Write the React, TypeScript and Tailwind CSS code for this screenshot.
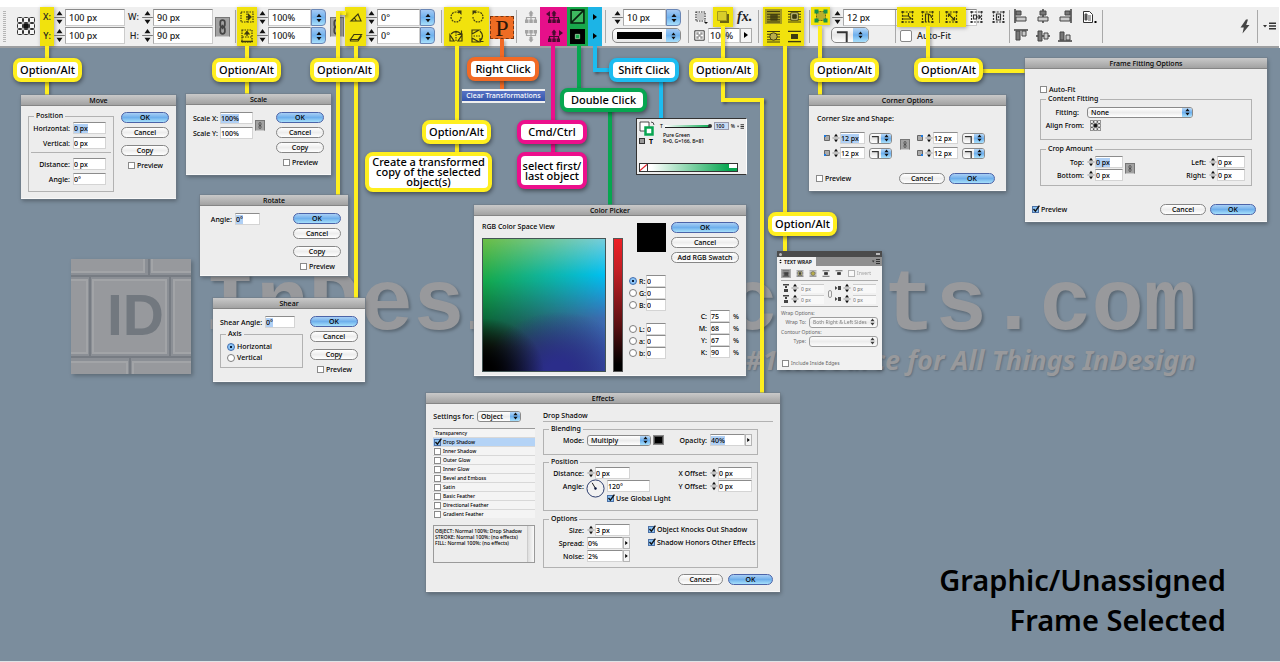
import type { ReactNode } from "react";

type Kids = { children?: ReactNode; className?: string };

/* --- SMALL CONTROLS --- */

function Arrows({ className = "w-[5px] h-[8px]" }: { className?: string }) {
  return (
    <svg viewBox="0 0 5 8" className={`shrink-0 ${className}`} fill="#111">
      <path d="M2.5 0.5 4.6 3.2H0.4zM2.5 7.5 4.6 4.8H0.4z" />
    </svg>
  );
}

function Stepper({ big }: { big?: boolean }) {
  return (
    <svg viewBox="0 0 10 14" className={big ? "w-[11px] h-[15px] shrink-0" : "w-[8px] h-[10px] shrink-0"} fill="#111">
      <path d="M5 1 7.8 5H2.2zM5 13 7.8 9H2.2z" />
      <path d="M0 6.5h10v1H0z" fill="#777" />
    </svg>
  );
}

function Box({ value, name, hot, step, className = "w-[33px]" }: { value: string; name: string; hot?: boolean; step?: boolean; className?: string }) {
  return (
    <span className="flex items-center shrink-0">
      {step && <Stepper />}
      <span className={`flex items-center h-3 bg-white border border-[#d4d4d4] border-t-[#8c8c8c] ${className}`}>
        <input aria-label={name} defaultValue={value} className={`field-sizing-content max-w-full h-[9px] leading-[9px] outline-none ${hot ? "bg-[#b0d0f5]" : "bg-transparent"}`} />
      </span>
    </span>
  );
}

function Row({ label, lw, children, className = "" }: Kids & { label: string; lw: string }) {
  return (
    <div className={`flex items-center h-3 ${className}`}>
      <span className={`text-right shrink-0 whitespace-nowrap mr-[3px] ${lw}`}>{label}</span>
      {children}
    </div>
  );
}

function Check({ label, on, className = "" }: { label: string; on?: boolean; className?: string }) {
  return (
    <label className={`flex items-center gap-[2px] whitespace-nowrap ${className}`}>
      <span className="relative flex shrink-0">
        <input type="checkbox" defaultChecked={on} className="appearance-none w-[7px] h-[7px] bg-white border border-[#8a8a8a] checked:bg-[#8cc3f3] checked:border-[#4a6fa5]" />
        {on && (
          <svg viewBox="0 0 8 8" className="absolute left-0 -top-px w-2 h-2" fill="none" stroke="#111" strokeWidth="1.4">
            <path d="M1.5 4 3.4 6.2 7.4 0.6" />
          </svg>
        )}
      </span>
      {label}
    </label>
  );
}

function Radio({ label, group, on, className = "" }: { label: string; group: string; on?: boolean; className?: string }) {
  return (
    <label className={`flex items-center gap-[2px] ${className}`}>
      <input type="radio" name={group} defaultChecked={on} className="appearance-none w-2 h-2 shrink-0 rounded-full bg-white border border-[#7d7d7d] checked:border-[#3f6cae] checked:bg-[radial-gradient(circle,#0a1a33_28%,#8cc4f5_36%)]" />
      {label}
    </label>
  );
}

function Btn({ children, primary, className = "w-[48px]" }: Kids & { primary?: boolean }) {
  return (
    <button
      className={`h-[11px] shrink-0 leading-[9px] text-center rounded-full border ${
        primary
          ? "border-[#4c64a8] bg-[linear-gradient(#a9cff5,#6fb0ec_50%,#a6e0fb)]"
          : "border-[#868686] bg-[linear-gradient(#fff,#ededed_50%,#fff)]"
      } ${className}`}
    >
      {children}
    </button>
  );
}

function Select({ value, name, className = "", plain }: { value: string; name: string; className?: string; plain?: boolean }) {
  return (
    <span className={`flex h-[11px] shrink-0 overflow-hidden rounded-[3px] border border-[#8a8a8a] bg-[linear-gradient(#fff,#ececec_50%,#fff)] ${className}`}>
      <select aria-label={name} className="appearance-none flex-1 min-w-0 pl-[3px] leading-[9px] bg-transparent outline-none">
        <option>{value}</option>
      </select>
      <span className={`w-[10px] flex items-center justify-center ${plain ? "" : "bg-[linear-gradient(#b6d7f7,#6eb0ee_50%,#a8e0fb)]"}`}>
        <Arrows />
      </span>
    </span>
  );
}

function CornerSelect({ name, big }: { name: string; big?: boolean }) {
  return (
    <button aria-label={name} className={`flex shrink-0 overflow-hidden border border-[#8a8a8a] bg-[linear-gradient(#fff,#e6e6e6_50%,#fff)] ${big ? "w-[38px] h-[16px] rounded-[5px]" : "w-[23px] h-[11px] rounded-[3px]"}`}>
      <svg viewBox="0 0 12 10" className="flex-1 min-w-0 h-full" fill="none" stroke="#333" strokeWidth="1.4">
        <path d="M2 3h7v7" />
      </svg>
      <span className={`h-full flex items-center justify-center bg-[linear-gradient(#b6d7f7,#6eb0ee_50%,#a8e0fb)] ${big ? "w-[15px]" : "w-[10px]"}`}>
        <Arrows />
      </span>
    </button>
  );
}

function LinkIcon({ className = "w-[11px] h-[11px]" }: { className?: string }) {
  return (
    <span className={`flex items-center justify-center shrink-0 bg-[#a2a2a2] border border-[#777] border-b-[#ccc] ${className}`}>
      <svg viewBox="0 0 8 14" className="h-full py-px" fill="none" stroke="#444" strokeWidth="1.5">
        <rect x="2" y="1" width="4" height="6" rx="2" />
        <rect x="2" y="7" width="4" height="6" rx="2" />
        <path d="M4 5v4" />
      </svg>
    </span>
  );
}

function Flyout() {
  return (
    <button aria-label="More" className="w-[7px] h-3 shrink-0 flex items-center justify-center border border-[#b5b5b5] bg-[#f4f4f4]">
      <svg viewBox="0 0 4 6" className="w-[3px] h-[4px]"><path d="M0 0 4 3 0 6z" /></svg>
    </button>
  );
}

function Group({ legend, children, className = "" }: Kids & { legend: string }) {
  return (
    <fieldset className={`border border-[#b2b2b2] shrink-0 min-w-0 ${className}`}>
      <legend className="ml-[5px] px-[2px] h-2 leading-[8px]">{legend}</legend>
      {children}
    </fieldset>
  );
}

function Dialog({ title, children, className = "" }: Kids & { title: string }) {
  return (
    <section className={`absolute bg-[#ededed] border-b border-[#f8f8f8] outline outline-[#6f7c88]/50 shadow-[1px_2px_4px_rgba(0,0,0,0.3)] text-[7px] leading-[9px] font-medium text-black ${className}`}>
      <h2 className="h-[11px] leading-[11px] text-center bg-[linear-gradient(#c9c9c9,#a2a2a2)] border-b border-[#858585]">{title}</h2>
      {children}
    </section>
  );
}

function DialogButtons({ split, className = "" }: { split?: boolean; className?: string }) {
  return (
    <div className={`flex flex-col gap-1 ${className}`}>
      <Btn primary>OK</Btn>
      <Btn>Cancel</Btn>
      <Btn className={split ? "w-[48px] mt-[3px]" : "w-[48px]"}>Copy</Btn>
      <Check label="Preview" className="self-end mr-[6px] mt-px" />
    </div>
  );
}

/* --- CALLOUTS --- */

const tones = {
  yellow: "border-[#ffef1f]",
  orange: "border-[#f26a25]",
  cyan: "border-[#1cbcf0]",
  green: "border-[#06a650]",
  pink: "border-[#ec0f8c]",
};

function Callout({ tone = "yellow", children, className = "" }: Kids & { tone?: keyof typeof tones }) {
  return (
    <div className={`absolute flex items-center justify-center text-center whitespace-nowrap bg-white border-4 rounded-[8px] shadow-[1px_2px_4px_rgba(0,0,0,0.45)] text-[11px] leading-[10px] font-medium text-black ${tones[tone]} ${className}`}>
      {children}
    </div>
  );
}

function Wire({ className }: { className: string }) {
  return <i className={`absolute shadow-[2px_2px_3px_rgba(0,0,0,0.25)] ${className}`} />;
}

/* --- CONTROL BAR --- */

function BarField({ value, name, arrows }: { value: string; name: string; arrows?: boolean }) {
  return (
    <label className="flex items-center h-[17px]">
      <Stepper big />
      <input aria-label={name} defaultValue={value} className="flex-1 min-w-0 h-full pl-[3px] bg-white border border-[#ccc] border-t-[#8a8a8a] border-l-[#aaa] outline-none" />
      {arrows && (
        <span className="w-[15px] h-full rounded-r-[4px] border border-[#6a86b5] flex items-center justify-center bg-[linear-gradient(#a4c9f3,#6fb2ee_50%,#a8dffb)]">
          <Arrows className="w-[6px] h-[10px]" />
        </span>
      )}
    </label>
  );
}

function Stack({ children, className = "" }: Kids) {
  return <div className={`flex flex-col gap-px pt-[2px] shrink-0 ${className}`}>{children}</div>;
}

function Sep({ className = "" }: { className?: string }) {
  return <i className={`w-px my-[3px] shrink-0 bg-[#a9a9a9] ${className}`} />;
}

function Hot({ children, className = "" }: Kids) {
  return <div className={`flex flex-col items-center justify-around shrink-0 bg-[#f1e20d] shadow-[1px_1px_4px_rgba(0,0,0,0.3)] ${className}`}>{children}</div>;
}

function Glyph({ children, className = "w-[14px] h-[14px]" }: Kids) {
  return (
    <svg viewBox="0 0 14 14" className={`shrink-0 ${className}`} fill="none" stroke="#3d3a10" strokeWidth="1.2">
      {children}
    </svg>
  );
}

function RefPoint({ className }: { className: string }) {
  const at = [0.5, 6.5, 12.5];
  return (
    <svg viewBox="0 0 18 18" className={`shrink-0 ${className}`} fill="#f4f4f4" stroke="#333">
      <path d="M4 2.500h10M4 15.500h10M2.500 4v10M15.500 4v10" fill="none" />
      {at.map((y) => at.map((x) => <rect key={`${x}-${y}`} x={x} y={y} width="5" height="5" rx="1" fill={x === 6.5 && y === 6.5 ? "#111" : "#f4f4f4"} />))}
    </svg>
  );
}

function Tree({ color, flip, arrow }: { color: string; flip?: boolean; arrow?: "left" | "right" }) {
  return (
    <svg viewBox="0 0 18 14" className="w-[18px] h-[14px]" fill={color} stroke={color}>
      <g transform={flip ? "matrix(1 0 0 -1 0 14)" : undefined}>
        <path d="M9 3v8M4.500 11V7.500h9V11" fill="none" strokeWidth="1.200" />
        <path d="M9 0.500 11.500 3.500h-5z" stroke="none" />
        <path d="M7.500 3h3v3h-3zM3 9.500h3.500V13H3zM7.300 9.500h3.500V13H7.300zM11.600 9.500H15V13h-3.400z" stroke="none" />
      </g>
      {arrow === "left" && <path d="M5 1v6L1 4z" stroke="none" />}
      {arrow === "right" && <path d="M14 1v6l4-3z" stroke="none" />}
    </svg>
  );
}

const corners = "M1 1h2v2H1zM11 1h2v2h-2zM1 11h2v2H1zM11 11h2v2h-2z";

function FitIcon({ d, tone = "#3d3a10" }: { d: string; tone?: string }) {
  return (
    <svg viewBox="0 0 14 14" className="w-[15px] h-[14px] shrink-0" fill="none" stroke={tone} strokeWidth="1.2">
      <path d="M2 2h10v10H2z" strokeDasharray="2 1.200" />
      <path d={corners} fill={tone} stroke="none" />
      <path d={d} />
    </svg>
  );
}

function AlignIcon({ line, a, b }: { line: string; a: string; b: string }) {
  return (
    <svg viewBox="0 0 14 14" className="w-[14px] h-[14px]" strokeWidth="1">
      <path d={line} stroke="#222" strokeWidth="1.300" />
      <path d={a} fill="#777" stroke="#444" />
      <path d={b} fill="#ccc" stroke="#444" />
    </svg>
  );
}

function WrapIcon({ kind, tone = "#3d3a10", className = "w-[15px] h-[13px]" }: { kind: number; tone?: string; className?: string }) {
  return (
    <svg viewBox="0 0 14 14" className={`shrink-0 ${className}`} fill={tone} stroke={tone}>
      {kind < 4 && <path d="M0 1.500h14M0 4.500h14M0 7.500h14M0 10.500h14M0 13h14" strokeWidth="1.100" />}
      {kind === 1 && <path d="M4 5h7v6H4z" opacity="0.8" />}
      {kind === 2 && <path d="M3 3h8v8H3z" fill="#ddd68a" />}
      {kind === 2 && <path d="M5 5h4v4H5z" />}
      {kind === 3 && <circle cx="7" cy="7" r="4" fill="#b9ae4a" />}
      {kind > 3 && <path d="M0 1.500h14M4 5h6v4H4z" strokeWidth="1.500" />}
      {kind === 4 && <path d="M0 12.500h14" strokeWidth="1.500" />}
    </svg>
  );
}

function ControlBar() {
  return (
    <header className="bg-white pt-[7px] pr-px text-[9px] leading-[12px] font-medium text-[#222]">
      <div className="flex h-[39px] bg-[#efefef]">
        <i className="w-[3px] ml-[3px] my-[4px] shrink-0 bg-[repeating-linear-gradient(#b5b5b5_0_1px,#efefef_1px_2px)]" />
        <RefPoint className="w-[18px] h-[18px] ml-[11px] mt-[10px]" />
        <Hot className="w-[14px] ml-[5px]"><span>X:</span><span>Y:</span></Hot>
        <Stack className="w-[71px]">
          <BarField name="X" value="100 px" />
          <BarField name="Y" value="100 px" />
        </Stack>
        <div className="w-[17px] pr-[3px] shrink-0 flex flex-col justify-around text-right"><span>W:</span><span>H:</span></div>
        <Stack className="w-[71px]">
          <BarField name="W" value="90 px" />
          <BarField name="H" value="90 px" />
        </Stack>
        <LinkIcon className="w-[15px] h-5 ml-[2px] mt-[10px]" />
        <Sep className="ml-[5px]" />
        <Hot className="w-5 ml-px">
          <Glyph><path d="M1 2h6v10H1zM7 2h6v10H7" strokeDasharray="1.500 1" /><path d="M6 7h4M8.500 4.500 11 7 8.500 9.500z" fill="#3d3a10" /></Glyph>
          <Glyph><path d="M2 1h10v7H2zM2 8v5h10V8" strokeDasharray="1.500 1" /><path d="M7 3v4M5 5h4L7 2.500z" fill="#3d3a10" /><path d="M1 12.500h12" strokeWidth="1.500" /></Glyph>
        </Hot>
        <Stack className="w-[69px]">
          <BarField name="Scale X" value="100%" arrows />
          <BarField name="Scale Y" value="100%" arrows />
        </Stack>
        <LinkIcon className="w-[14px] h-5 ml-1 mt-[10px]" />
        <Hot className="w-[21px] ml-px">
          <Glyph><path d="M2 11h10L9 4z" /><path d="M5 8q2 1 2 3" /></Glyph>
          <Glyph><path d="M1.500 10.500 5 5.500h7.500L9 10.500zM1.500 10.500v1.500H9l3.500-5" /></Glyph>
        </Hot>
        <Stack className="w-[69px]">
          <BarField name="Rotation" value="0°" arrows />
          <BarField name="Shear" value="0°" arrows />
        </Stack>
        <Sep className="ml-[6px]" />
        <Hot className="w-[45px] ml-[2px]">
          <div className="flex gap-[8px]">
            <Glyph><path d="M10 3a5 5 0 1 0 2 4" strokeDasharray="1.800 0.900" /><path d="M8 0.500h4.500V5z" fill="#3d3a10" stroke="none" /></Glyph>
            <Glyph><path d="M4 3a5 5 0 1 1-2 4" strokeDasharray="1.800 0.900" /><path d="M6 0.500H1.500V5z" fill="#3d3a10" stroke="none" /></Glyph>
          </div>
          <div className="flex gap-[8px]">
            <Glyph><path d="M1 12V6l4 6zM13 12V6l-4 6z" /><path d="M7 3v10" strokeDasharray="1.500 1" /><path d="M2 5q5-5 10 0M12.500 1.500v4h-4" /></Glyph>
            <Glyph><path d="M1 1h7L1 5zM1 13h7L1 9z" /><path d="M0 7h9" strokeDasharray="1.500 1" /><path d="M9 2q5 5 0 10M9 9v3.500h3.500" /></Glyph>
          </div>
        </Hot>
        <div className="w-6 h-[23px] ml-px mt-[9px] shrink-0 flex items-center justify-center bg-[#ee6c23] border border-dashed border-[#7a3610] font-['Liberation_Serif',serif] text-[24px] leading-[20px] text-[#2c1608]">P</div>
        <Sep className="ml-[2px]" />
        <div className="w-[18px] ml-[5px] shrink-0 flex flex-col items-center justify-around">
          <Tree color="#a3a3a3" />
          <Tree color="#a3a3a3" flip />
        </div>
        <div className="w-[27px] shrink-0 flex flex-col items-center justify-around bg-[#e6108a]">
          <Tree color="#4b0a30" arrow="left" />
          <Tree color="#4b0a30" arrow="right" />
        </div>
        <div className="w-[21px] shrink-0 flex flex-col items-center justify-around bg-[#18a84c]">
          <svg viewBox="0 0 14 14" className="w-[15px] h-[15px]"><path d="M1 1h12v12H1zM1 13 13 1" fill="#3fb95f" stroke="#08210f" strokeWidth="1.500" /></svg>
          <svg viewBox="0 0 14 14" className="w-[15px] h-[15px]"><path d="M0 0h14v14H0z" /><path d="M5 5h4v4H5z" fill="#18a84c" stroke="#cfc" strokeWidth="0.600" /></svg>
        </div>
        <div className="w-[14px] shrink-0 flex flex-col items-center justify-around bg-[#1cb4e6]">
          <svg viewBox="0 0 8 8" className="w-2 h-2"><path d="M2 1 6 4 2 7z" /></svg>
          <svg viewBox="0 0 8 8" className="w-2 h-2"><path d="M2 1 6 4 2 7z" /></svg>
        </div>
        <Sep className="ml-[3px]" />
        <Stack className="w-[69px] ml-[6px]">
          <BarField name="Stroke weight" value="10 px" arrows />
          <button aria-label="Stroke style" className="flex items-center h-[15px] mt-px rounded-[5px] border border-[#8a8a8a] bg-[linear-gradient(#fff,#e8e8e8)] overflow-hidden">
            <span className="flex-1 h-[7px] mx-1 bg-black" />
            <span className="w-[14px] h-full flex items-center justify-center bg-[linear-gradient(#a4c9f3,#6fb2ee_50%,#a8dffb)]"><Arrows /></span>
          </button>
        </Stack>
        <Sep className="ml-[7px]" />
        <div className="w-[60px] ml-[5px] shrink-0">
          <div className="flex items-center h-[20px]">
            <Glyph><path d="M2 2h9v9H2z" stroke="#333" strokeDasharray="1.500 1" /><path d="M3 3h7v7H3z" fill="#c9c9c9" stroke="none" /><path d="M10 12h4l-2 2z" fill="#111" stroke="none" /></Glyph>
            <Hot className="w-5 h-5 ml-[5px]">
              <svg viewBox="0 0 14 14" className="w-[14px] h-[14px]"><path d="M4 4h9v9H4z" fill="#6b6412" /><path d="M1.500 1.500h9v9h-9z" fill="#d8cd2a" stroke="#a39a1c" /></svg>
            </Hot>
            <span className="ml-1 font-['Liberation_Serif',serif] italic font-bold text-[14px]">fx.</span>
          </div>
          <div className="flex items-center h-4">
            <Glyph className="w-[11px] h-[11px]"><path d="M1 1h12v12H1z" stroke="#333" fill="#fff" /><path d="M3 3h3v3H3zM8 3h3v3H8zM5.500 5.500h3v3h-3zM3 8h3v3H3zM8 8h3v3H8z" fill="#999" stroke="none" /></Glyph>
            <input aria-label="Opacity" defaultValue="100%" className="w-[32px] h-[15px] ml-[3px] pl-px bg-white border border-[#ccc] border-t-[#888] outline-none" />
            <button aria-label="Opacity slider" className="w-3 h-[15px] flex items-center justify-center border border-[#aaa] bg-[#f6f6f6]"><svg viewBox="0 0 4 6" className="w-1 h-[6px]"><path d="M0 0 4 3 0 6z" /></svg></button>
          </div>
        </div>
        <Sep className="ml-[4px]" />
        <Hot className="w-[41px] ml-1">
          <div className="flex gap-[4px]">
            <span className="bg-[#a59b22] p-px"><WrapIcon kind={1} /></span>
            <span className="p-px"><WrapIcon kind={2} /></span>
          </div>
          <div className="flex gap-[4px]">
            <span className="p-px"><WrapIcon kind={3} /></span>
            <span className="p-px"><WrapIcon kind={4} /></span>
          </div>
        </Hot>
        <Sep className="ml-[5px]" />
        <div className="w-[79px] ml-px shrink-0">
          <div className="flex h-[19px] pb-px">
            <Hot className="w-[19px] mr-[2px]">
              <svg viewBox="0 0 14 14" className="w-[14px] h-[14px]"><path d="M2.500 2.500h9v9h-9z" fill="#b9af2c" stroke="#6d6614" strokeDasharray="2 1" /><path d="M0.500 0.500h4v4h-4zM9.500 0.500h4v4h-4zM0.500 9.500h4v4h-4zM9.500 9.500h4v4h-4z" fill="#16914b" /></svg>
            </Hot>
            <div className="flex-1 pt-[2px]"><BarField name="Corner size" value="12 px" /></div>
          </div>
          <div className="pl-5 pt-px"><CornerSelect big name="Corner shape" /></div>
        </div>
        <Sep className="ml-[5px]" />
        <div className="w-[109px] ml-px shrink-0">
          <div className="flex items-center h-5">
            <div className="flex items-center gap-[5px] w-[69px] h-full px-[3px] bg-[#f1e20d] shadow-[1px_1px_4px_rgba(0,0,0,0.3)]">
              <FitIcon d="M2 6h6l3 3M2 9h9M8 3v3" />
              <FitIcon d="M5 12V4h3q3 1 3 4M8 4v8" />
              <i className="w-px h-3 -mx-px bg-[#8d841a]" />
              <FitIcon d="M4 4l3 3M4 7V4h3M10 10 7 7M10 7v3H7" />
            </div>
            <div className="flex gap-[7px] pl-[3px]">
              <FitIcon tone="#333" d="M4 5h3v4H4zM7 7h4M9 5l2 2-2 2" />
              <FitIcon tone="#333" d="M5 4h4v6H5zM7 6v2" />
            </div>
          </div>
          <label className="flex items-center gap-[5px] pl-[3px] pt-[3px]">
            <input type="checkbox" className="appearance-none w-3 h-3 bg-white border border-[#888] rounded-[2px]" />
            Auto-Fit
          </label>
        </div>
        <Sep className="ml-[3px]" />
        <div className="w-[58px] ml-1 pt-[2px] shrink-0 grid grid-cols-3 gap-x-[8px] gap-y-[6px] content-start">
          <AlignIcon line="M1 0v14" a="M2 2h5v4H2z" b="M2 8h10v4H2z" />
          <AlignIcon line="M7 0v14" a="M4 2h6v4H4z" b="M2 8h10v4H2z" />
          <AlignIcon line="M13 0v14" a="M7 2h5v4H7z" b="M2 8h10v4H2z" />
          <AlignIcon line="M0 1h14" a="M2 2h4v9H2z" b="M8 2h4v5H8z" />
          <AlignIcon line="M0 7h14" a="M2 2h4v10H2z" b="M8 4h4v6H8z" />
          <AlignIcon line="M0 12h14" a="M2 3h4v8H2z" b="M8 6h4v5H8z" />
        </div>
        <svg viewBox="0 0 15 14" className="w-[15px] h-[14px] ml-[10px] mt-[3px] shrink-0"><path d="M1.500 1.500h6l3 3v8h-9z" fill="#fff" stroke="#333" /><path d="M3 4h2v6H3zM6 6h3M6 8h3M6 10h3" fill="#555" stroke="#555" /><path d="M12.500 11h2v2h-2z" /></svg>
        <Sep className="ml-[5px]" />
        <svg viewBox="0 0 10 14" className="w-[10px] h-[15px] ml-auto mt-3 shrink-0" fill="#444"><path d="M6 0 0.500 8h3.300L2.500 14 9.500 5.500H6.200L8 0z" /></svg>
        <Sep className="ml-[7px]" />
        <svg viewBox="0 0 13 8" className="w-[13px] h-2 mx-[5px] mr-[3px] mt-[15px] shrink-0" fill="#333"><path d="M0 3h4L2 5.500zM6 0.500h7V2H6zM6 3.200h7v1.500H6zM6 6h7v1.500H6z" /></svg>
      </div>
      <i className="block h-[2px] bg-[#9d9fa1]" />
    </header>
  );
}

/* --- DIALOGS --- */

function MoveDialog() {
  return (
    <Dialog title="Move" className="left-[21px] top-[95px] w-[155px] h-[104px]">
      <div className="flex justify-between pl-[7px] pr-[7px] pt-[6px]">
        <Group legend="Position" className="w-[86px] h-[80px]">
          <div className="flex flex-col gap-[3px] pt-[2px]">
            <Row label="Horizontal:" lw="w-[41px]"><Box name="Horizontal" value="0 px" hot /></Row>
            <Row label="Vertical:" lw="w-[41px]"><Box name="Vertical" value="0 px" /></Row>
            <i className="h-px mx-[2px] mb-[2px] bg-[#b2b2b2]" />
            <Row label="Distance:" lw="w-[41px]"><Box name="Distance" value="0 px" /></Row>
            <Row label="Angle:" lw="w-[41px]"><Box name="Angle" value="0°" /></Row>
          </div>
        </Group>
        <DialogButtons split />
      </div>
    </Dialog>
  );
}

function ScaleDialog() {
  return (
    <Dialog title="Scale" className="left-[186px] top-[94px] w-[145px] h-[81px]">
      <div className="flex px-[7px] pt-[7px]">
        <div className="flex flex-col gap-[3px]">
          <Row label="Scale X:" lw="w-6"><Box name="Scale X" value="100%" hot /></Row>
          <Row label="Scale Y:" lw="w-6"><Box name="Scale Y" value="100%" /></Row>
        </div>
        <LinkIcon className="w-[10px] h-[11px] ml-[2px] mt-2" />
        <DialogButtons className="ml-auto" />
      </div>
    </Dialog>
  );
}

function RotateDialog() {
  return (
    <Dialog title="Rotate" className="left-[200px] top-[195px] w-[148px] h-[81px]">
      <div className="flex justify-between px-[7px] pt-[7px]">
        <Row label="Angle:" lw="w-[25px]"><Box name="Angle" value="0°" hot className="w-[25px]" /></Row>
        <DialogButtons split />
      </div>
    </Dialog>
  );
}

function ShearDialog() {
  return (
    <Dialog title="Shear" className="left-[213px] top-[298px] w-[152px] h-[84px]">
      <div className="flex justify-between px-[7px] pt-[7px]">
        <div>
          <Row label="Shear Angle:" lw="w-[42px]"><Box name="Shear angle" value="0°" hot className="w-[30px]" /></Row>
          <Group legend="Axis" className="w-[83px] h-[38px] mt-[2px]">
            <div className="flex flex-col gap-[2px] pl-[6px] pt-1">
              <Radio group="axis" label="Horizontal" on />
              <Radio group="axis" label="Vertical" />
            </div>
          </Group>
        </div>
        <DialogButtons split />
      </div>
    </Dialog>
  );
}

function ColorPicker() {
  return (
    <Dialog title="Color Picker" className="left-[474px] top-[205px] w-[272px] h-[171px]">
      <div className="flex pl-[8px] pr-[7px] pt-[6px]">
        <div className="w-[124px]">
          <p className="whitespace-nowrap mb-[7px]">RGB Color Space View</p>
          <div className="relative h-[134px] border border-[#455] bg-[linear-gradient(#6cbe45,#14a84a_32%,#0a6b38_60%,#16260f_82%,#000)]">
            <i className="absolute inset-0 bg-[linear-gradient(#76cddd,#00bff3_27%,#3d6cb4_60%,#3850a3)] [mask-image:linear-gradient(90deg,transparent,#000)]" />
            <i className="absolute inset-0 bg-[radial-gradient(ellipse_60%_45%_at_62%_100%,#2b2d8a_15%,transparent)]" />
            <i className="absolute inset-0 bg-[radial-gradient(ellipse_50%_40%_at_0%_100%,#000_15%,transparent)]" />
          </div>
        </div>
        <div className="w-[10px] h-[134px] ml-[7px] mt-[16px] border border-[#555] bg-[linear-gradient(#ee2026,#c01e24_25%,#5c1012_65%,#000_95%)]" />
        <div className="flex-1 pl-[6px]">
          <div className="flex justify-between">
            <i className="w-[29px] h-[29px] mt-px ml-[8px] bg-black" />
            <div className="flex flex-col gap-1">
              <Btn primary className="w-[68px]">OK</Btn>
              <Btn className="w-[68px]">Cancel</Btn>
              <Btn className="w-[68px]">Add RGB Swatch</Btn>
            </div>
          </div>
          <div className="flex justify-between pt-3">
            <div className="flex flex-col">
              {["R", "G", "B"].map((c, i) => (
                <div key={c} className="flex items-center">
                  <Radio group="space" label={`${c}:`} on={i === 0} className="w-[17px]" />
                  <Box name={c} value="0" className="w-5" />
                </div>
              ))}
              <i className="h-3" />
              {["L", "a", "b"].map((c) => (
                <div key={c} className="flex items-center">
                  <Radio group="space" label={`${c}:`} className="w-[17px]" />
                  <Box name={c} value="0" className="w-5" />
                </div>
              ))}
            </div>
            <div className="flex flex-col pt-[35px]">
              {[["C", "75"], ["M", "68"], ["Y", "67"], ["K", "90"]].map(([c, v]) => (
                <Row key={c} label={`${c}:`} lw="w-[10px]">
                  <Box name={c} value={v} className="w-5" />
                  <span className="ml-[3px]">%</span>
                </Row>
              ))}
            </div>
          </div>
        </div>
      </div>
    </Dialog>
  );
}

function CornerRow({ hot, names, low }: { hot?: boolean; names: [string, string]; low?: boolean }) {
  return (
    <div className="flex items-center gap-[3px]">
      {names.map((n, i) => (
        <div key={n} className={i ? "flex items-center gap-1 ml-[22px]" : "flex items-center gap-1"}>
          <span className="flex items-center gap-[2px]">
            <svg viewBox="0 0 6 6" className="w-[6px] h-[6px]"><path d="M0.500 0.500h5v5h-5z" fill="#aaa" stroke="#666" /><rect x={i ? 4 : 0} y={low ? 4 : 0} width="2" height="2" fill="#1d7ae0" /></svg>
            <Box name={n} value="12 px" hot={hot && i === 0} step className="w-[25px]" />
          </span>
          <CornerSelect name={`${n} shape`} />
        </div>
      ))}
    </div>
  );
}

function CornerOptions() {
  return (
    <Dialog title="Corner Options" className="left-[809px] top-[95px] w-[197px] h-[96px]">
      <p className="pl-2 pt-[8px]">Corner Size and Shape:</p>
      <div className="flex flex-col gap-[3px] pl-[15px] pt-[9px] relative">
        <CornerRow hot names={["Top left", "Top right"]} />
        <CornerRow low names={["Bottom left", "Bottom right"]} />
        <span className="absolute left-[91px] top-[16px]"><LinkIcon className="w-[10px] h-[11px]" /></span>
      </div>
      <div className="flex items-center pl-[7px] pr-[11px] pt-[14px]">
        <Check label="Preview" className="mr-auto" />
        <Btn className="w-[46px] mr-1">Cancel</Btn>
        <Btn primary className="w-[46px]">OK</Btn>
      </div>
    </Dialog>
  );
}

function FrameFitting() {
  return (
    <Dialog title="Frame Fitting Options" className="left-[1025px] top-[58px] w-[242px] h-[164px]">
      <div className="px-[15px] pt-4">
        <Check label="Auto-Fit" />
        <Group legend="Content Fitting" className="h-[45px] mt-[1px]">
          <Row label="Fitting:" lw="w-[38px]" className="mt-[3px]"><Select name="Fitting" value="None" className="w-[106px] ml-[5px]" /></Row>
          <Row label="Align From:" lw="w-[43px]" className="mt-px"><RefPoint className="w-[11px] h-[11px] ml-[3px]" /></Row>
        </Group>
        <Group legend="Crop Amount" className="h-[41px] mt-[5px]">
          <div className="flex pt-[3px]">
            <div className="flex flex-col gap-px">
              <Row label="Top:" lw="w-[43px]"><Box name="Top" value="0 px" hot step className="w-[28px]" /></Row>
              <Row label="Bottom:" lw="w-[43px]"><Box name="Bottom" value="0 px" step className="w-[28px]" /></Row>
            </div>
            <LinkIcon className="w-[10px] h-[11px] ml-[2px] mt-[7px]" />
            <div className="flex flex-col gap-px ml-auto mr-[6px]">
              <Row label="Left:" lw="w-6"><Box name="Left" value="0 px" step className="w-[28px]" /></Row>
              <Row label="Right:" lw="w-6"><Box name="Right" value="0 px" step className="w-[28px]" /></Row>
            </div>
          </div>
        </Group>
      </div>
      <div className="flex items-center pl-[7px] pr-[11px] pt-[18px]">
        <Check label="Preview" on className="mr-auto" />
        <Btn className="w-[46px] mr-1">Cancel</Btn>
        <Btn primary className="w-[46px]">OK</Btn>
      </div>
    </Dialog>
  );
}

const effects = ["Drop Shadow", "Inner Shadow", "Outer Glow", "Inner Glow", "Bevel and Emboss", "Satin", "Basic Feather", "Directional Feather", "Gradient Feather"];

function EffectsDialog() {
  return (
    <Dialog title="Effects" className="left-[426px] top-[393px] w-[354px] h-[199px]">
      <div className="flex gap-2 px-[7px] pt-[6px]">
        <div className="w-[102px] shrink-0">
          <Row label="Settings for:" lw="w-[41px]"><Select name="Settings for" value="Object" className="w-[44px]" /></Row>
          <ul className="mt-[6px] text-[5px] border-t border-[#9a9a9a] bg-[#f4f4f4]">
            <li className="h-[8px] leading-[8px] pl-[2px]">Transparency</li>
            {effects.map((e, i) => (
              <li key={e} className={`flex items-center h-[9px] pl-px border-t border-[#d8d8d8] ${i === 0 ? "bg-[#b4d3f6]" : ""}`}>
                <Check label={e} on={i === 0} />
              </li>
            ))}
          </ul>
          <div className="h-[38px] mt-[7px] flex border border-[#9a9a9a] text-[5px] leading-[6px] whitespace-nowrap">
            <p className="flex-1 pl-px pt-[2px] overflow-hidden">
              OBJECT: Normal 100%; Drop Shadow<br />
              STROKE: Normal 100%; (no effects)<br />
              FILL: Normal 100%; (no effects)
            </p>
            <i className="w-[7px] border-l border-[#ccc] bg-[linear-gradient(90deg,#ddd,#fafafa)]" />
          </div>
        </div>
        <div className="flex-1">
          <h3 className="h-3 leading-[12px] border-b border-[#b2b2b2]">Drop Shadow</h3>
          <Group legend="Blending" className="w-[215px] h-[30px] mt-[3px]">
            <div className="flex items-center pt-px pr-[5px]">
              <Row label="Mode:" lw="w-10"><Select name="Mode" value="Multiply" className="w-[64px]" /></Row>
              <i className="w-[11px] h-[10px] ml-[2px] border border-[#888] bg-black outline -outline-offset-2 outline-white/30" />
              <Row label="Opacity:" lw="w-8" className="ml-auto"><Box name="Opacity" value="40%" hot className="w-[35px]" /><Flyout /></Row>
            </div>
          </Group>
          <Group legend="Position" className="w-[215px] h-[53px] mt-[3px]">
            <div className="flex justify-between pt-px pr-[5px]">
              <div>
                <Row label="Distance:" lw="w-10"><Box name="Distance" value="0 px" step className="w-[35px]" /></Row>
                <div className="flex">
                  <Row label="Angle:" lw="w-10" className="mt-px" />
                  <svg viewBox="0 0 20 20" className="w-[19px] h-[19px] -ml-px" fill="#f2f2f2" stroke="#223366"><circle cx="10" cy="10" r="9" /><path d="M6.500 4 10 10" stroke="#111" /><circle cx="10" cy="10" r="1" fill="#111" /></svg>
                  <div className="ml-[2px]">
                    <div className="mt-px"><Box name="Angle" value="120°" className="w-[43px]" /></div>
                    <Check label="Use Global Light" on className="mt-[2px]" />
                  </div>
                </div>
              </div>
              <div className="flex flex-col gap-px">
                <Row label="X Offset:" lw="w-8"><Box name="X offset" value="0 px" step className="w-[34px]" /></Row>
                <Row label="Y Offset:" lw="w-8"><Box name="Y offset" value="0 px" step className="w-[34px]" /></Row>
              </div>
            </div>
          </Group>
          <Group legend="Options" className="w-[215px] h-[53px] mt-1">
            <div className="flex pt-px">
              <div className="flex flex-col gap-px">
                <Row label="Size:" lw="w-10"><Box name="Size" value="3 px" step className="w-[35px]" /></Row>
                <Row label="Spread:" lw="w-10"><Box name="Spread" value="0%" className="w-[36px]" /><Flyout /></Row>
                <Row label="Noise:" lw="w-10"><Box name="Noise" value="2%" className="w-[36px]" /><Flyout /></Row>
              </div>
              <div className="flex flex-col gap-[4px] ml-[18px] pt-px">
                <Check label="Object Knocks Out Shadow" on />
                <Check label="Shadow Honors Other Effects" on />
              </div>
            </div>
          </Group>
          <div className="flex justify-end gap-[5px] pt-[6px]">
            <Btn className="w-[45px]">Cancel</Btn>
            <Btn primary className="w-[45px]">OK</Btn>
          </div>
        </div>
      </div>
    </Dialog>
  );
}

function TextWrapPanel() {
  return (
    <section className="absolute left-[777px] top-[251px] w-[105px] h-[119px] bg-[#f1f1f1] shadow-[1px_2px_4px_rgba(0,0,0,0.3)] text-[5px] leading-[8px] text-[#666]">
      <div className="flex items-center justify-between h-[6px] px-[2px] bg-[#4b4b4b]">
        <i className="w-[3px] h-[3px] rounded-full bg-[#bbb]" />
        <i className="w-[4px] h-[2px] bg-[#bbb]" />
      </div>
      <div className="flex items-center justify-between h-[9px] bg-[#8f8f8f]">
        <h2 className="flex items-center gap-[2px] h-full px-[2px] pr-1 bg-[#f1f1f1] font-bold text-[#222]"><Arrows className="w-[3px] h-[5px]" />TEXT WRAP</h2>
        <svg viewBox="0 0 8 5" className="w-2 h-[5px] mr-[2px]" fill="#333"><path d="M0 1.500h2.500L1.200 3.500zM4 0h4v1H4zM4 2h4v1H4zM4 4h4v1H4z" /></svg>
      </div>
      <div className="px-1">
        <div className="flex items-center gap-[5px] h-[15px] border-b border-[#aaa]">
          <span className="bg-[#aaa] p-px"><WrapIcon kind={1} tone="#333" className="w-[8px] h-[7px]" /></span>
          <WrapIcon kind={2} tone="#444" className="w-[8px] h-[7px]" />
          <WrapIcon kind={3} tone="#555" className="w-[8px] h-[7px]" />
          <WrapIcon kind={4} tone="#333" className="w-[8px] h-[7px]" />
          <WrapIcon kind={5} tone="#333" className="w-[8px] h-[7px]" />
          <Check label="Invert" className="opacity-60" />
        </div>
        <div className="flex justify-between items-center h-[26px] px-[2px] border-b border-[#aaa]">
          {[["Top", "Bottom"], ["Left", "Right"]].map((pair, i) => (
            <div key={pair[0]} className={i ? "order-3" : "order-1"}>
              {pair.map((n) => (
                <div key={n} className="flex items-center gap-[2px] h-[11px]">
                  <svg viewBox="0 0 6 8" className="w-[6px] h-2" fill="#444"><path d={i ? "M0 2v4l2.500-2zM3 2h3v4H3z" : "M0 0h6v1.500H0zM2 2h2v2H2zM1 5h4v3H1z"} /></svg>
                  <Stepper />
                  <input aria-label={n} defaultValue="0 px" className="w-[23px] h-[9px] bg-[#f8f8f8] border-t border-[#ccc] outline-none" />
                </div>
              ))}
            </div>
          ))}
          <svg viewBox="0 0 4 8" className="order-2 w-1 h-2" fill="none" stroke="#999"><rect x="0.500" y="0.500" width="3" height="7" rx="1.500" /></svg>
        </div>
        <p className="pt-[2px]">Wrap Options:</p>
        <div className="flex items-center justify-end gap-[3px] h-[10px]">Wrap To:<Select plain name="Wrap to" value="Both Right & Left Sides" className="w-[69px] h-[10px] opacity-80" /></div>
        <p className="pt-px">Contour Options:</p>
        <div className="flex items-center justify-end gap-[3px] h-[10px]">Type:<Select plain name="Type" value="" className="w-[69px] h-[10px] opacity-80" /></div>
        <Check label="Include Inside Edges" className="pt-[13px] pl-px" />
      </div>
    </section>
  );
}

function ColorPanel() {
  return (
    <section className="absolute left-[636px] top-[118px] w-[111px] h-[57px] px-[2px] bg-[#ededed] border border-[#333] border-r-white flex flex-col text-[5px] leading-[6px] font-medium text-black">
      <div className="flex flex-1 pt-[2px]">
        <div className="w-[21px]">
          <svg viewBox="0 0 17 15" className="w-[17px] h-[15px]" fill="#fff" stroke="#222"><path d="M1 1h9v9H1z" strokeWidth="0.800" /><path d="M6.500 6.500h7v7h-7z" stroke="#08a551" strokeWidth="2.500" /><path d="M12 1q3 0 3 3" fill="none" strokeWidth="0.800" /></svg>
          <div className="flex gap-1 mt-[2px] text-[7px] leading-[7px] font-bold"><i className="w-[6px] h-[6px] bg-[#999] border border-[#333]" />T</div>
        </div>
        <div className="flex-1">
          <div className="flex items-center gap-[2px] h-[10px]">
            T
            <span className="flex-1 h-[3px] border-b border-[#222] bg-[linear-gradient(90deg,#fff,#0aa650)]" />
            <i className="-ml-1 w-[4px] h-[4px] rounded-full bg-[#333]" />
            <input aria-label="Tint" defaultValue="100" className="w-[15px] h-2 pl-px bg-[#c8dcf7] border border-[#99a]" />
            %
            <svg viewBox="0 0 8 5" className="w-[7px] h-[5px]" fill="#333"><path d="M0 1.500h2.500L1.200 3.500zM4 0h4v1H4zM4 2h4v1H4zM4 4h4v1H4z" /></svg>
          </div>
          <p className="pt-px pl-[3px]">Pure Green<br />R=0, G=166, B=81</p>
        </div>
      </div>
      <div className="flex w-[99px] h-[9px] mb-[2px] border border-[#333] bg-[linear-gradient(90deg,#fff_12%,#06a650_92%)]">
        <svg viewBox="0 0 8 7" className="w-2 h-full bg-white border-r border-[#333]" stroke="#e0202a" strokeWidth="1.200"><path d="M0 7 8 0" /></svg>
        <i className="w-2 h-1 ml-auto bg-white" />
      </div>
    </section>
  );
}

function Watermark() {
  return (
    <div className="text-[#98999c]">
      <svg viewBox="0 0 120 115" className="absolute left-[71px] top-[259px] w-[120px] h-[115px] shadow-[2px_2px_4px_rgba(0,0,0,0.25)]">
        <path d="M0 0h120v115H0z" fill="#8b8f95" />
        <g fill="#97999d" stroke="#a2a4a7" strokeWidth="2">
          <path d="M-8 -8H73V13H-8zM81 -8h50v21H81zM-8 21H16V94H-8zM22 21H95V94H22zM103 21h30v73h-30zM-8 103H56v20H-8zM62 103h70v20H62z" />
        </g>
        <path d="M0 17h120M19 18v79M99 18v79M0 98h120M78 0v17M59 99v16" stroke="#777c83" strokeWidth="2" fill="none" />
        <text x="36" y="76" fontSize="57" fontWeight="700" fontFamily="'Liberation Sans',sans-serif" fill="#72787f">ID</text>
      </svg>
      <p className="absolute left-[204px] top-[257px] font-['Liberation_Mono',monospace] font-bold text-[87px] leading-[98px] whitespace-nowrap [text-shadow:2px_2px_3px_rgba(0,0,0,0.25)]">InDesignSecrets.com</p>
      <p className="absolute left-[745px] top-[342px] font-bold italic text-[27px] leading-[36px] whitespace-nowrap [text-shadow:1px_1px_2px_rgba(0,0,0,0.2)]">#1 Resource for All Things InDesign</p>
    </div>
  );
}

export default function App() {
  return (
    <main className="relative min-h-screen flex flex-col overflow-hidden border-b border-[#dfe3e6] bg-[#7b8d9d] font-['Noto_Sans',sans-serif]">
      <Watermark />
      <ControlBar />

      {/* --- WIRES --- */}
      <div>
        <Wire className="left-[45px] top-[46px] w-1 h-[50px] bg-[#ffef1f]" />
        <Wire className="left-[245px] top-[46px] w-1 h-[50px] bg-[#ffef1f]" />
        <Wire className="left-[336px] top-[11px] w-[10px] h-1 bg-[#ffef1f]" />
        <Wire className="left-[336px] top-[11px] w-1 h-[186px] bg-[#ffef1f]" />
        <Wire className="left-[354px] top-[46px] w-1 h-[254px] bg-[#ffef1f]" />
        <Wire className="left-[455px] top-[46px] w-1 h-[112px] bg-[#ffef1f]" />
        <Wire className="left-[500px] top-[39px] w-1 h-[52px] bg-[#f26a25]" />
        <Wire className="left-[551px] top-[46px] w-1 h-[112px] bg-[#ec0f8c]" />
        <Wire className="left-[577px] top-[46px] w-1 h-[50px] bg-[#06a650]" />
        <Wire className="left-[608px] top-[100px] w-1 h-[106px] bg-[#06a650]" />
        <Wire className="left-[593px] top-[46px] w-1 h-[26px] bg-[#1cbcf0]" />
        <Wire className="left-[593px] top-[68px] w-5 h-1 bg-[#1cbcf0]" />
        <Wire className="left-[659px] top-[78px] w-1 h-[41px] bg-[#1cbcf0]" />
        <Wire className="left-[721px] top-[26px] w-1 h-[76px] bg-[#ffef1f]" />
        <Wire className="left-[721px] top-[98px] w-[43px] h-1 bg-[#ffef1f]" />
        <Wire className="left-[760px] top-[98px] w-1 h-[296px] bg-[#ffef1f]" />
        <Wire className="left-[783px] top-[46px] w-1 h-[206px] bg-[#ffef1f]" />
        <Wire className="left-[818px] top-[26px] w-1 h-[70px] bg-[#ffef1f]" />
        <Wire className="left-[926px] top-[26px] w-1 h-[34px] bg-[#ffef1f]" />
        <Wire className="left-[980px] top-[69px] w-[46px] h-1 bg-[#ffef1f]" />
      </div>

      {/* --- CALLOUTS --- */}
      <div>
        <Callout className="left-[13px] top-[58px] w-[69px] h-6">Option/Alt</Callout>
        <Callout className="left-[212px] top-[58px] w-[69px] h-6">Option/Alt</Callout>
        <Callout className="left-[310px] top-[58px] w-[69px] h-6">Option/Alt</Callout>
        <Callout className="left-[422px] top-[120px] w-[69px] h-6">Option/Alt</Callout>
        <Callout className="left-[689px] top-[58px] w-[69px] h-6">Option/Alt</Callout>
        <Callout className="left-[810px] top-[58px] w-[69px] h-6">Option/Alt</Callout>
        <Callout className="left-[914px] top-[58px] w-[69px] h-6">Option/Alt</Callout>
        <Callout className="left-[768px] top-[212px] w-[69px] h-6">Option/Alt</Callout>
        <Callout tone="orange" className="left-[467px] top-[57px] w-[72px] h-6">Right Click</Callout>
        <Callout tone="cyan" className="left-[609px] top-[58px] w-[70px] h-6">Shift Click</Callout>
        <Callout tone="green" className="left-[560px] top-[88px] w-[87px] h-6">Double Click</Callout>
        <Callout tone="pink" className="left-[517px] top-[120px] w-[70px] h-6">Cmd/Ctrl</Callout>
        <Callout tone="pink" className="left-[517px] top-[152px] w-[70px] h-[37px]">select first/<br />last object</Callout>
        <Callout className="left-[365px] top-[152px] w-[127px] h-10">Create a transformed<br />copy of the selected<br />object(s)</Callout>
        <p className="absolute left-[462px] top-[89px] w-[83px] h-[14px] text-center text-[7px] leading-[10px] font-medium whitespace-nowrap text-white border-y-2 border-[#efefef] bg-[linear-gradient(#5873c4,#3556ac)]">Clear Transformations</p>
      </div>

      {/* --- DIALOGS --- */}
      <MoveDialog />
      <ScaleDialog />
      <RotateDialog />
      <ShearDialog />
      <ColorPanel />
      <ColorPicker />
      <CornerOptions />
      <FrameFitting />
      <TextWrapPanel />
      <EffectsDialog />

      <h1 className="mt-auto ml-auto pr-[54px] pb-[21px] text-right text-[29px] leading-[40px] font-semibold text-black">
        Graphic/Unassigned<br />
        Frame Selected
      </h1>
    </main>
  );
}
